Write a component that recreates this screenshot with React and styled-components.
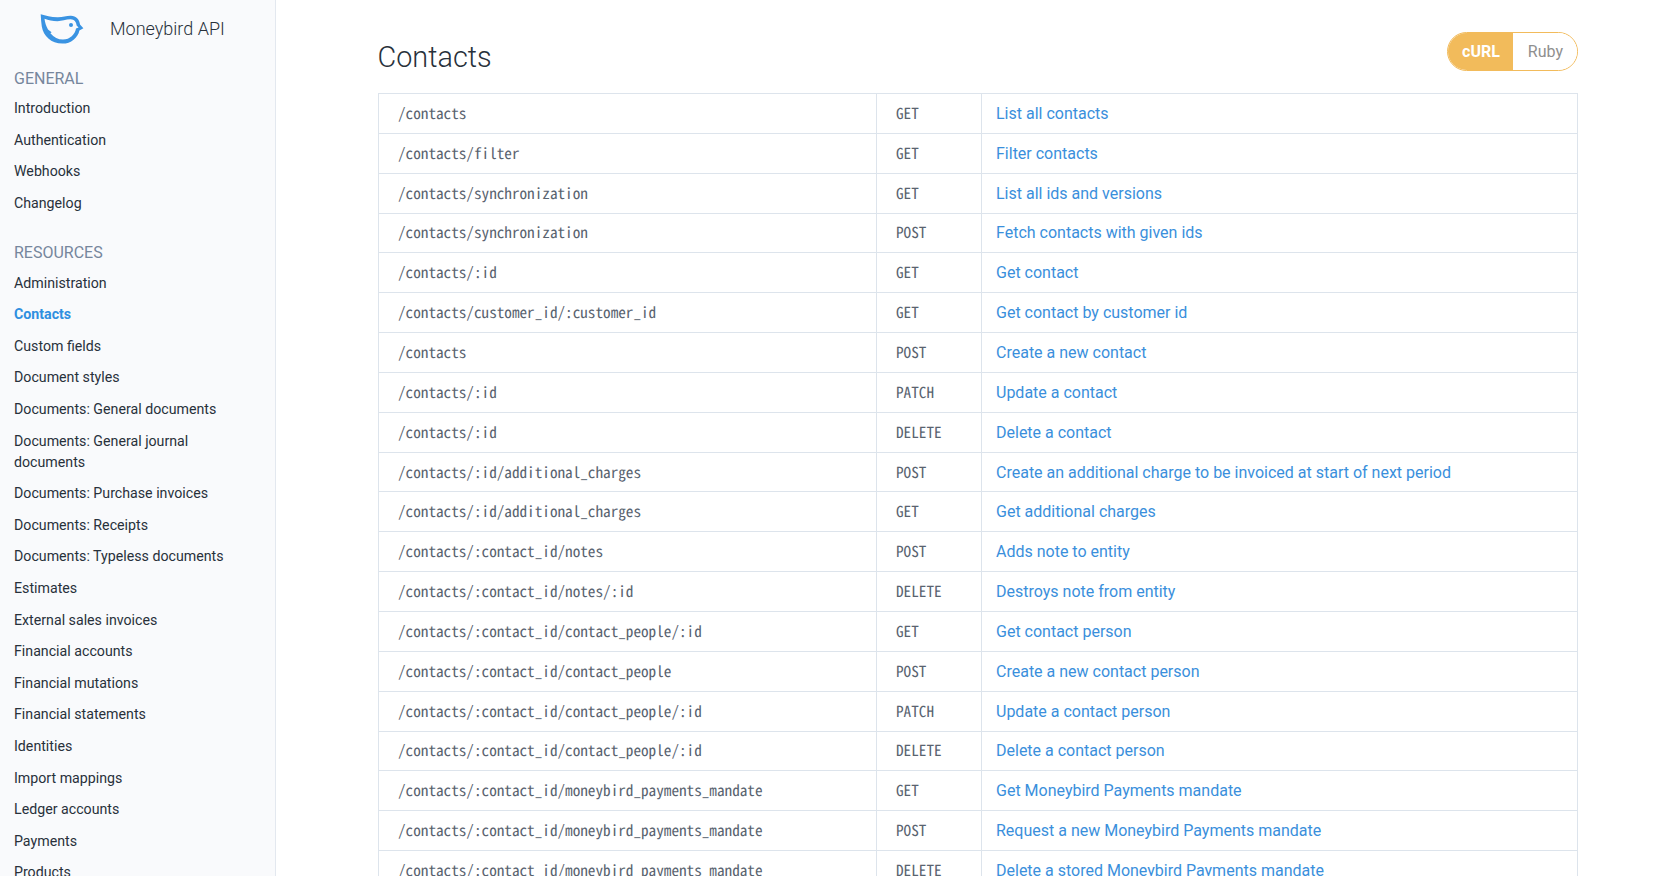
import styled, { createGlobalStyle } from 'styled-components';

const GlobalStyle = createGlobalStyle`
  html, body {
    margin: 0;
    height: 100%;
    overflow: hidden;
    background: #fff;
  }

  body {
    font-family: Roboto, "Liberation Sans", sans-serif;
    font-size: 16px;
    color: #24292f;
  }
`;

const Page = styled.div`
  display: flex;
  height: 100vh;
  overflow: hidden;
`;

const Sidebar = styled.aside`
  flex: 0 0 276px;
  box-sizing: border-box;
  height: 100%;
  overflow: hidden;
  background: #f9fafc;
  border-right: 1px solid #e3e8ef;
  padding: 0 14px;
`;

const Brand = styled.div`
  display: flex;
  align-items: center;
  height: 58px;
  padding-left: 26px;
  gap: 24px;
`;

const BrandName = styled.span`
  padding-bottom: 2px;
  font-size: 18px;
  font-weight: 300;
  color: #28313b;
`;

const Section = styled.section`
  margin-top: ${(props) => (props.$first ? '9px' : '22px')};
`;

const SectionTitle = styled.h3`
  margin: 0 0 2px;
  font-size: 16px;
  line-height: 24px;
  font-weight: 400;
  color: #76869c;
`;

const NavList = styled.ul`
  list-style: none;
  margin: 0;
  padding: 0;
`;

const NavItem = styled.li`
  font-size: 14.2px;
  line-height: 21px;
  padding: 5.31px 0;
  color: ${(props) => (props.$active ? '#2f8fe0' : '#28313b')};
  font-weight: ${(props) => (props.$active ? 700 : 400)};
`;

const Main = styled.main`
  flex: 1;
  min-width: 0;
  padding: 32px 102px 0;
`;

const Header = styled.header`
  display: flex;
  justify-content: space-between;
  align-items: flex-start;
  height: 61px;
`;

const Title = styled.h1`
  margin: 6px 0 0 -0.5px;
  font-size: 28.8px;
  line-height: 38px;
  font-weight: 300;
  color: #28313b;
`;

const Toggle = styled.div`
  display: flex;
  box-sizing: border-box;
  height: 39px;
  border: 1px solid #f2bb5b;
  border-radius: 20px;
  overflow: hidden;
`;

const ToggleOption = styled.span`
  display: flex;
  align-items: center;
  padding: ${(props) => (props.$active ? '0 13px 0 14px' : '0 14px 0 15px')};
  font-size: 16px;
  font-weight: ${(props) => (props.$active ? 700 : 400)};
  color: ${(props) => (props.$active ? '#fff' : '#8f8f8f')};
  background: ${(props) => (props.$active ? '#f2bb5b' : '#fff')};
`;

const Table = styled.table`
  width: 100%;
  border-collapse: collapse;
  table-layout: fixed;
`;

const Cell = styled.td`
  box-sizing: border-box;
  height: 39.85px;
  padding: 1px 14px 0;
  border: 1px solid #dde4ec;
  line-height: 24px;
`;

const PathCell = styled(Cell)`
  width: 498px;
  padding: 0 14px 0 19px;
`;

const MethodCell = styled(Cell)`
  width: 105px;
  padding: 0 14px 0 19px;
`;

const Mono = styled.code`
  font-family: "Noto Sans Mono CJK SC", "DejaVu Sans Mono", monospace;
  font-size: 15.2px;
  text-rendering: geometricPrecision;
  color: #59636f;
`;

const EndpointLink = styled.a`
  color: #3a8fdc;
  text-decoration: none;
`;

const general = ['Introduction', 'Authentication', 'Webhooks', 'Changelog'];

const resources = [
  'Administration',
  'Contacts',
  'Custom fields',
  'Document styles',
  'Documents: General documents',
  'Documents: General journal documents',
  'Documents: Purchase invoices',
  'Documents: Receipts',
  'Documents: Typeless documents',
  'Estimates',
  'External sales invoices',
  'Financial accounts',
  'Financial mutations',
  'Financial statements',
  'Identities',
  'Import mappings',
  'Ledger accounts',
  'Payments',
  'Products',
];

const endpoints = [
  ['/contacts', 'GET', 'List all contacts'],
  ['/contacts/filter', 'GET', 'Filter contacts'],
  ['/contacts/synchronization', 'GET', 'List all ids and versions'],
  ['/contacts/synchronization', 'POST', 'Fetch contacts with given ids'],
  ['/contacts/:id', 'GET', 'Get contact'],
  ['/contacts/customer_id/:customer_id', 'GET', 'Get contact by customer id'],
  ['/contacts', 'POST', 'Create a new contact'],
  ['/contacts/:id', 'PATCH', 'Update a contact'],
  ['/contacts/:id', 'DELETE', 'Delete a contact'],
  ['/contacts/:id/additional_charges', 'POST', 'Create an additional charge to be invoiced at start of next period'],
  ['/contacts/:id/additional_charges', 'GET', 'Get additional charges'],
  ['/contacts/:contact_id/notes', 'POST', 'Adds note to entity'],
  ['/contacts/:contact_id/notes/:id', 'DELETE', 'Destroys note from entity'],
  ['/contacts/:contact_id/contact_people/:id', 'GET', 'Get contact person'],
  ['/contacts/:contact_id/contact_people', 'POST', 'Create a new contact person'],
  ['/contacts/:contact_id/contact_people/:id', 'PATCH', 'Update a contact person'],
  ['/contacts/:contact_id/contact_people/:id', 'DELETE', 'Delete a contact person'],
  ['/contacts/:contact_id/moneybird_payments_mandate', 'GET', 'Get Moneybird Payments mandate'],
  ['/contacts/:contact_id/moneybird_payments_mandate', 'POST', 'Request a new Moneybird Payments mandate'],
  ['/contacts/:contact_id/moneybird_payments_mandate', 'DELETE', 'Delete a stored Moneybird Payments mandate'],
];

function Logo() {
  return (
    <svg width="46" height="34" viewBox="40 12 46 34" aria-hidden="true">
      <path
        fillRule="evenodd"
        fill="#3a93e2"
        d="M40.7 14.3C46 15.6 51 17.4 58 17.3C63 17.2 67 15.6 71 15.8C76 16 79.5 19.6 80 24.6L83.4 28.2L79.4 30.4C78 37.6 71 43.6 62.5 43.6C51 43.6 43.4 36 41.8 26.5C41.2 22.5 40.9 18.5 40.7 14.3ZM44.5 18.8C45 22.5 46 26 48 29.5L51.6 32.2L50.4 33.2C54 37.4 58 39.6 63 39.6C70 39.6 75 34.6 76 28.6L78.6 27.6L76.6 25.6C76.4 22 74 19.4 70.8 19.3C66 19.2 62 21.2 57.5 21.2C52.5 21.2 48.5 20 44.5 18.8Z"
      />
      <circle cx="71" cy="25" r="2" fill="#3a93e2" />
    </svg>
  );
}

function App() {
  return (
    <Page>
      <GlobalStyle />
      <Sidebar>
        <Brand>
          <Logo />
          <BrandName>Moneybird API</BrandName>
        </Brand>
        <Section $first>
          <SectionTitle>GENERAL</SectionTitle>
          <NavList>
            {general.map((item) => (
              <NavItem key={item}>{item}</NavItem>
            ))}
          </NavList>
        </Section>
        <Section>
          <SectionTitle>RESOURCES</SectionTitle>
          <NavList>
            {resources.map((item) => (
              <NavItem key={item} $active={item === 'Contacts'}>
                {item}
              </NavItem>
            ))}
          </NavList>
        </Section>
      </Sidebar>
      <Main>
        <Header>
          <Title>Contacts</Title>
          <Toggle>
            <ToggleOption $active>cURL</ToggleOption>
            <ToggleOption>Ruby</ToggleOption>
          </Toggle>
        </Header>
        <Table>
          <tbody>
            {endpoints.map(([path, method, label]) => (
              <tr key={path + method}>
                <PathCell>
                  <Mono>{path}</Mono>
                </PathCell>
                <MethodCell>
                  <Mono>{method}</Mono>
                </MethodCell>
                <Cell>
                  <EndpointLink href="#">{label}</EndpointLink>
                </Cell>
              </tr>
            ))}
          </tbody>
        </Table>
      </Main>
    </Page>
  );
}

export default App;
